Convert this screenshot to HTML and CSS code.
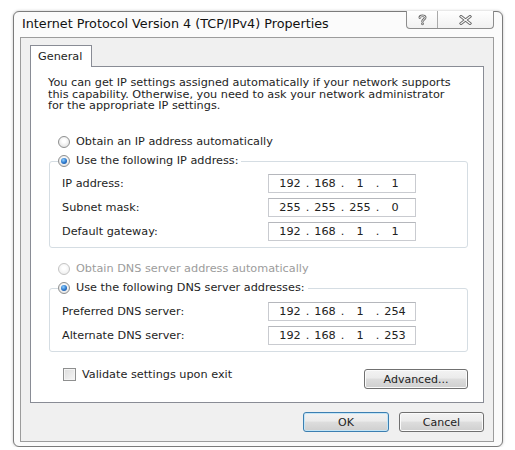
FILE: index.html
```html
<!DOCTYPE html>
<html>
<head>
<meta charset="utf-8">
<link rel="stylesheet" href="styles.css">
</head>
<body>
<div class="window">
  <div class="titlebar">
    <div class="title">Internet Protocol Version 4 (TCP/IPv4) Properties</div>
    <div class="caption-btns">
      <div class="cbtn help">
        <svg width="9" height="12" viewBox="0 0 9 12">
          <path d="M1.8 3.6 C1.8 1.3 7.2 1.1 7.2 3.6 C7.2 5.4 4.5 5.3 4.5 7.3" fill="none" stroke="#6b6b6b" stroke-width="2.6" stroke-linecap="round"/>
          <circle cx="4.5" cy="9.8" r="1.4" fill="#6b6b6b"/>
          <path d="M1.8 3.6 C1.8 1.3 7.2 1.1 7.2 3.6 C7.2 5.4 4.5 5.3 4.5 7.3" fill="none" stroke="#ffffff" stroke-width="0.9" stroke-linecap="round"/>
          <circle cx="4.5" cy="9.8" r="0.5" fill="#ffffff"/>
        </svg>
      </div>
      <div class="cbtn close">
        <svg width="13" height="10" viewBox="0 0 13 10">
          <path d="M2 1.5 L11 8.5 M11 1.5 L2 8.5" fill="none" stroke="#6b6b6b" stroke-width="3" stroke-linecap="square"/>
          <path d="M2 1.5 L11 8.5 M11 1.5 L2 8.5" fill="none" stroke="#ffffff" stroke-width="1.1" stroke-linecap="square"/>
        </svg>
      </div>
    </div>
  </div>
  <div class="client">
    <div class="tabs"><div class="tab">General</div></div>
    <div class="pane">
      <p class="intro">You can get IP settings assigned automatically if your network supports<br>this capability. Otherwise, you need to ask your network administrator<br>for the appropriate IP settings.</p>

      <div class="option first"><span class="radio"></span>Obtain an IP address automatically</div>
      <fieldset class="group">
        <legend class="option"><span class="radio checked"></span>Use the following IP address:</legend>
        <div class="grid">
          <span class="lbl">IP address:</span>
          <div class="ip"><span class="seg">192</span><span class="dot">.</span><span class="seg">168</span><span class="dot">.</span><span class="seg">1</span><span class="dot">.</span><span class="seg">1</span></div>
          <span class="lbl">Subnet mask:</span>
          <div class="ip"><span class="seg">255</span><span class="dot">.</span><span class="seg">255</span><span class="dot">.</span><span class="seg">255</span><span class="dot">.</span><span class="seg">0</span></div>
          <span class="lbl">Default gateway:</span>
          <div class="ip"><span class="seg">192</span><span class="dot">.</span><span class="seg">168</span><span class="dot">.</span><span class="seg">1</span><span class="dot">.</span><span class="seg">1</span></div>
        </div>
      </fieldset>

      <div class="option second disabled"><span class="radio"></span>Obtain DNS server address automatically</div>
      <fieldset class="group">
        <legend class="option"><span class="radio checked"></span>Use the following DNS server addresses:</legend>
        <div class="grid dns">
          <span class="lbl">Preferred DNS server:</span>
          <div class="ip"><span class="seg">192</span><span class="dot">.</span><span class="seg">168</span><span class="dot">.</span><span class="seg">1</span><span class="dot">.</span><span class="seg">254</span></div>
          <span class="lbl">Alternate DNS server:</span>
          <div class="ip"><span class="seg">192</span><span class="dot">.</span><span class="seg">168</span><span class="dot">.</span><span class="seg">1</span><span class="dot">.</span><span class="seg">253</span></div>
        </div>
      </fieldset>

      <div class="footer-row">
        <div class="check-row"><span class="checkbox"></span>Validate settings upon exit</div>
        <button class="btn advanced">Advanced...</button>
      </div>
    </div>
    <div class="dialog-btns">
      <button class="btn ok">OK</button>
      <button class="btn cancel">Cancel</button>
    </div>
  </div>
</div>
</body>
</html>
```

FILE: styles.css
```css
* { box-sizing: border-box; }

html, body {
  margin: 0;
  padding: 0;
  background: #ffffff;
}

body {
  font-family: "DejaVu Sans", "Open Sans", sans-serif;
  font-size: 11.25px;
  color: #1e1e1e;
}

.window {
  margin: 11px 0 0 13px;
  width: 490px;
  height: 436px;
  border: 1px solid #7b7b7b;
  border-radius: 6px;
  background: #fbfbfb;
  box-shadow: 0 0 3px rgba(0, 0, 0, 0.25);
  display: flex;
  flex-direction: column;
}

.titlebar {
  height: 25px;
  display: flex;
  align-items: flex-start;
  justify-content: space-between;
}

.title {
  font-size: 12.75px;
  line-height: 16px;
  padding: 4px 0 0 8px;
  color: #111;
  white-space: nowrap;
}

.caption-btns {
  margin: -1px 8px 0 0;
  width: 88px;
  height: 18px;
  display: flex;
  border: 1px solid #8d8d8d;
  border-top: none;
  border-radius: 0 0 4px 4px;
  background: linear-gradient(#ffffff, #f1f1f1);
}

.cbtn {
  display: flex;
  align-items: center;
  justify-content: center;
}

.cbtn.help {
  width: 31px;
  border-right: 1px solid #a9a9a9;
}

.cbtn.close {
  flex: 1;
}

.client {
  flex: 1;
  margin: 0 8px 4px 6px;
  border: 1px solid #9c9c9c;
  background: #f0f0f0;
  padding: 7px 9px 0 9px;
  display: flex;
  flex-direction: column;
}

.tabs {
  display: flex;
  height: 22px;
  margin-bottom: -1px;
  position: relative;
  z-index: 1;
}

.tab {
  width: 62px;
  height: 22px;
  border: 1px solid #898c95;
  border-bottom: none;
  background: #ffffff;
  padding: 3px 0 0 7px;
  line-height: 15px;
}

.pane {
  border: 1px solid #898c95;
  background: #ffffff;
  padding: 10px 15px 13px 17px;
}

.intro {
  margin: 0;
  line-height: 11.7px;
  white-space: nowrap;
}

.option {
  display: flex;
  align-items: center;
  height: 14px;
  line-height: 14px;
  white-space: nowrap;
}

.option.first { margin-top: 23px; }
.option.second { margin-top: 14px; }

.option.disabled { color: #9c9c9c; }

.radio {
  width: 12px;
  height: 12px;
  border-radius: 50%;
  border: 1px solid #8e8f8f;
  background: radial-gradient(circle at 50% 40%, #ffffff 20%, #e3e3e3 80%);
  margin: 0 6px 0 10px;
  flex: none;
  display: flex;
  align-items: center;
  justify-content: center;
}

.option.disabled .radio {
  border-color: #c4c4c4;
  background: radial-gradient(circle at 50% 40%, #ffffff 20%, #eeeeee 80%);
}

.radio.checked::after {
  content: "";
  width: 6px;
  height: 6px;
  border-radius: 50%;
  background: radial-gradient(circle at 40% 35%, #8fd0ff 0%, #2a74c9 55%, #17478a 100%);
}

.group {
  margin: 5px 0 0 1px;
  padding: 0 0 6px 0;
  border: 1px solid #d5dde3;
  border-radius: 3px;
  min-width: 0;
}

.group legend.option {
  padding: 0 3px 0 0;
  margin-left: 8px;
}

.group legend .radio {
  margin-left: 0;
}

.grid {
  display: grid;
  grid-template-columns: 206px 148px;
  grid-auto-rows: 19px;
  row-gap: 5px;
  margin: 6px 0 0 12px;
}

.grid.dns { margin-top: 7px; }

.lbl {
  align-self: center;
  line-height: 14px;
  white-space: nowrap;
}

.ip {
  display: flex;
  align-items: center;
  border: 1px solid #c9cbd0;
  border-top-color: #b5b7bc;
  background: #ffffff;
  padding-left: 7px;
  color: #222;
}

.seg {
  width: 28px;
  text-align: center;
}

.dot {
  width: 7px;
  text-align: center;
}

.footer-row {
  margin-top: 16px;
  display: flex;
  justify-content: space-between;
  align-items: flex-start;
}

.check-row {
  display: flex;
  align-items: center;
  height: 13px;
  line-height: 13px;
  margin-left: 15px;
}

.checkbox {
  width: 13px;
  height: 13px;
  border: 1px solid #8e8f8f;
  background: linear-gradient(135deg, #dcdcdc, #f6f6f6);
  box-shadow: inset 0 0 0 1px #f4f4f4;
  margin-right: 6px;
}

.btn {
  font-family: "DejaVu Sans", "Open Sans", sans-serif;
  font-size: 11px;
  color: #1e1e1e;
  height: 20px;
  padding: 0;
  border: 1px solid #707070;
  border-radius: 3px;
  background: linear-gradient(#f3f3f3 0%, #ebebeb 45%, #dddddd 50%, #cfcfcf 100%);
  box-shadow: inset 0 0 0 1px #fbfbfb;
  line-height: 17px;
}

.btn.advanced {
  width: 104px;
  margin-top: 1px;
}

.dialog-btns {
  margin-top: 9px;
  display: flex;
  justify-content: flex-end;
  gap: 10px;
}

.btn.ok {
  width: 86px;
  border-color: #3c7fb1;
  box-shadow: inset 0 0 0 1px #c4e5f6;
}

.btn.cancel {
  width: 85px;
}
```
